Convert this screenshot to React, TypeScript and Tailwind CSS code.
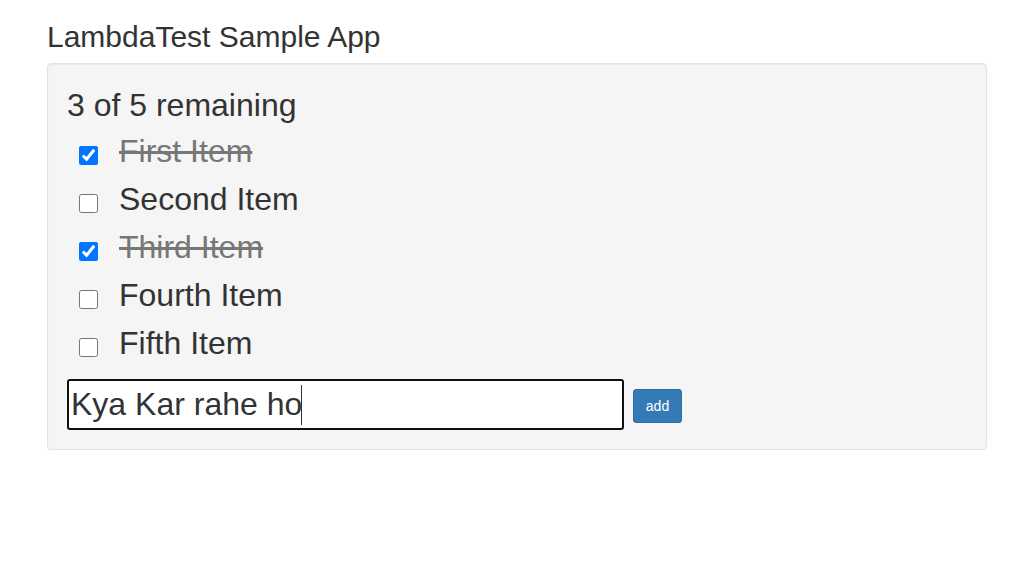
import { useState } from 'react'

interface Todo {
  text: string
  done: boolean
}

const initialTodos: Todo[] = [
  { text: 'First Item', done: true },
  { text: 'Second Item', done: false },
  { text: 'Third Item', done: true },
  { text: 'Fourth Item', done: false },
  { text: 'Fifth Item', done: false },
]

export default function App() {
  const [todos, setTodos] = useState<Todo[]>(initialTodos)
  const [draft, setDraft] = useState('Kya Kar rahe ho')

  const remaining = todos.filter((t) => !t.done).length

  const toggle = (idx: number) => {
    setTodos(todos.map((t, i) => (i === idx ? { ...t, done: !t.done } : t)))
  }

  const addTodo = () => {
    if (!draft.trim()) return
    setTodos([...todos, { text: draft, done: false }])
    setDraft('')
  }

  return (
    <div className="min-h-screen bg-white text-[#333] font-['Liberation_Sans',Arial,sans-serif]">
      <div className="w-[970px] mx-auto px-[15px]">
        <h2 className="text-[30px] leading-[33px] mt-5 mb-[10px]">LambdaTest Sample App</h2>

        <div className="bg-[#f5f5f5] border border-[#e3e3e3] rounded p-[19px] shadow-[inset_0_1px_1px_rgba(0,0,0,0.05)]">
          <div className="text-[32px] leading-[44px]">
            {remaining} of {todos.length} remaining
          </div>

          <ul>
            {todos.map((todo, idx) => (
              <li key={idx} className="flex items-start h-[48px]">
                <input
                  type="checkbox"
                  checked={todo.done}
                  onChange={() => toggle(idx)}
                  className="w-[19px] h-[19px] ml-[12px] mt-[19px] accent-[#0075ff]"
                />
                <span
                  className={`ml-[21px] text-[32px] leading-[48px] ${
                    todo.done ? 'line-through text-[#777]' : 'text-[#333]'
                  }`}
                >
                  {todo.text}
                </span>
              </li>
            ))}
          </ul>

          <div className="flex items-center mt-3">
            <div className="relative">
              <input
                type="text"
                value={draft}
                onChange={(e) => setDraft(e.target.value)}
                className="w-[557px] h-[51px] border-2 border-[#101010] rounded-[3px] bg-white pl-[2px] text-[32px] text-[#333] outline-none"
              />
              {/* fake caret */}
              <span className="absolute left-[234px] top-[6px] w-px h-[40px] bg-[#333]"></span>
            </div>
            <button
              onClick={addTodo}
              className="ml-[9px] mt-[3px] w-[49px] h-[34px] bg-[#337ab7] border border-[#2e6da4] rounded-[3px] text-white text-[14px]"
            >
              add
            </button>
          </div>
        </div>
      </div>
    </div>
  )
}
